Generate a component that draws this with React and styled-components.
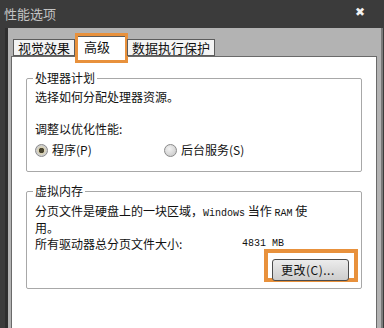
import React from "react";
import styled, { createGlobalStyle } from "styled-components";

const GlobalStyle = createGlobalStyle`
  html, body {
    margin: 0;
    padding: 0;
    background: #3b3b3b;
  }
  body {
    font-family: "Noto Sans CJK SC", "Liberation Sans", sans-serif;
  }
`;

const Window = styled.div`
  width: 384px;
  height: 328px;
  overflow: hidden;
  background: #3b3b3b;
  display: flex;
  flex-direction: column;
`;

const TitleBar = styled.div`
  height: 28px;
  flex: none;
  display: flex;
  align-items: center;
  justify-content: space-between;
  padding: 0 19px 0 4px;
  color: #c4c4c4;
  font-size: 13px;
  line-height: 14px;
`;

const CloseGlyph = styled.span`
  color: #f2f2f2;
  font-family: "DejaVu Sans", sans-serif;
  font-weight: bold;
  font-size: 12px;
  margin-top: -4px;
`;

const Frame = styled.div`
  flex: 1;
  display: flex;
  margin-left: 5px;
  border-left: 3px solid #2e2e2e;
  margin-right: 1px;
  border-right: 2px solid #7a7a7a;
`;

const Body = styled.div`
  flex: 1;
  background: #b3b3b3;
  padding: 9px 4px 0 3px;
  display: flex;
  flex-direction: column;
`;

const TabRow = styled.div`
  display: flex;
  align-items: flex-end;
  height: 19px;
  padding-left: 2px;
  position: relative;
  z-index: 1;
`;

const Tab = styled.div`
  position: relative;
  height: ${p => (p.$active ? "22px" : "17px")};
  margin-bottom: ${p => (p.$active ? "-2px" : "0")};
  padding: ${p => (p.$active ? "0 15px 0 6px" : "0 4px")};
  background: ${p => (p.$active ? "#ffffff" : "#f4f4f4")};
  border: 1px solid #5c5c5c;
  border-bottom: ${p => (p.$active ? "none" : "1px solid #5c5c5c")};
  margin-left: ${p => (p.$active ? "2px" : "0")};
  margin-right: ${p => (p.$active ? "1px" : "0")};
  font-size: 13px;
  line-height: ${p => (p.$active ? "19px" : "16px")};
  color: #111;
  box-sizing: border-box;

  ${p =>
    p.$active &&
    `
    &::after {
      content: "";
      position: absolute;
      left: -3px;
      right: -3px;
      top: -4px;
      bottom: -5px;
      border: 3px solid #e8913c;
      pointer-events: none;
    }
  `}
`;

const Panel = styled.div`
  flex: 1;
  background: #ffffff;
  border: 1px solid #6a6a6a;
  border-bottom: none;
  padding: 14px 14px 0 14px;
  display: flex;
  flex-direction: column;
`;

const Group = styled.fieldset`
  margin: 0 0 12px 0;
  padding: 0 8px ${p => p.$bottom}px 8px;
  border: 1px solid #a8a8a8;
  border-radius: 2px;
  display: flex;
  flex-direction: column;
`;

const Legend = styled.legend`
  padding: 0 2px;
  margin-left: -2px;
  font-size: 12px;
  line-height: 14px;
  color: #111;
`;

const Line = styled.div`
  font-size: 12px;
  line-height: 14px;
  color: #111;
  margin-top: ${p => p.$top || 0}px;
  white-space: nowrap;
`;

const Latin = styled.span`
  font-family: "Liberation Mono", monospace;
  font-size: 10px;
`;

const RadioRow = styled.div`
  display: flex;
  align-items: center;
  margin-top: 7px;
  height: 14px;
`;

const RadioOption = styled.label`
  display: flex;
  align-items: center;
  gap: 4px;
  width: ${p => p.$width}px;
  font-size: 12px;
  line-height: 14px;
  color: #111;
`;

const RadioDot = styled.span`
  width: 11px;
  height: 11px;
  border-radius: 50%;
  border: 1px solid #8a8a8a;
  background: ${p =>
    p.$checked
      ? "radial-gradient(circle, #4a4530 0 2.5px, #d8d2b8 3px 4px, #cfcfcf 4.5px)"
      : "radial-gradient(circle at 40% 35%, #f2f2f2, #c4c4c4)"};
  flex: none;
`;

const SizeRow = styled.div`
  display: flex;
  align-items: center;
  font-size: 12px;
  line-height: 14px;
  color: #111;
  margin-top: 2px;
`;

const SizeLabel = styled.span`
  width: 207px;
`;

const ButtonRow = styled.div`
  display: flex;
  justify-content: flex-end;
  margin-right: -5px;
`;

const Highlight = styled.div`
  border: 4px solid #e8913c;
  padding: 3px 5px 0 4px;
  height: 33px;
  margin-top: -2px;
  box-sizing: border-box;
`;

const Button = styled.button`
  width: 77px;
  height: 22px;
  border: 1px solid #4c4c4c;
  border-radius: 3px;
  background: linear-gradient(#ececec, #cdcdcd);
  font-family: "Noto Sans CJK SC", sans-serif;
  font-size: 12px;
  line-height: 14px;
  color: #111;
  padding: 0;
  text-align: left;
  padding-left: 8px;
  letter-spacing: 0.5px;
`;

export default function App() {
  return (
    <Window>
      <GlobalStyle />
      <TitleBar>
        <span>性能选项</span>
        <CloseGlyph>✖</CloseGlyph>
      </TitleBar>
      <Frame>
        <Body>
          <TabRow>
            <Tab>视觉效果</Tab>
            <Tab $active>高级</Tab>
            <Tab>数据执行保护</Tab>
          </TabRow>
          <Panel>
            <Group $bottom={14}>
              <Legend>处理器计划</Legend>
              <Line $top={5}>选择如何分配处理器资源。</Line>
              <Line $top={18}>调整以优化性能:</Line>
              <RadioRow>
                <RadioOption $width={129}>
                  <RadioDot $checked />
                  <span>程序(P)</span>
                </RadioOption>
                <RadioOption $width={140}>
                  <RadioDot />
                  <span>后台服务(S)</span>
                </RadioOption>
              </RadioRow>
            </Group>
            <Group $bottom={6}>
              <Legend>虚拟内存</Legend>
              <Line $top={6}>
                分页文件是硬盘上的一块区域，<Latin>Windows</Latin> 当作 <Latin>RAM</Latin> 使
                <br />
                用。
              </Line>
              <SizeRow>
                <SizeLabel>所有驱动器总分页文件大小:</SizeLabel>
                <Latin>4831 MB</Latin>
              </SizeRow>
              <ButtonRow>
                <Highlight>
                  <Button>更改(C)...</Button>
                </Highlight>
              </ButtonRow>
            </Group>
          </Panel>
        </Body>
      </Frame>
    </Window>
  );
}
